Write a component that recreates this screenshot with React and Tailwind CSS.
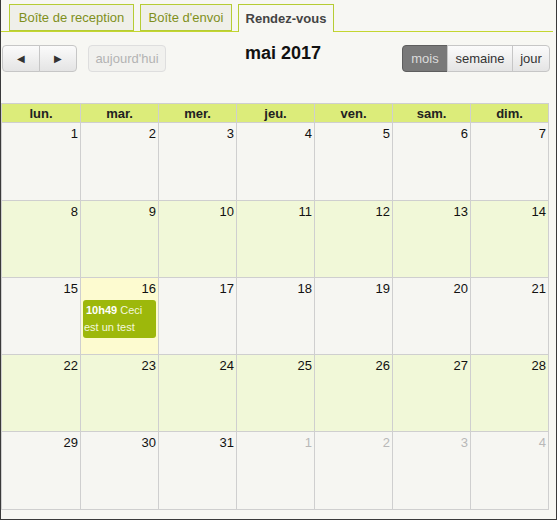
import React from 'react';

const days = ['lun.', 'mar.', 'mer.', 'jeu.', 'ven.', 'sam.', 'dim.'];

// May 2017 starts on a Monday; trailing days belong to June
const weeks = [
  [1, 2, 3, 4, 5, 6, 7],
  [8, 9, 10, 11, 12, 13, 14],
  [15, 16, 17, 18, 19, 20, 21],
  [22, 23, 24, 25, 26, 27, 28],
  [29, 30, 31, 1, 2, 3, 4],
];

const rowHeights = ['h-[78px]', 'h-[77px]', 'h-[77px]', 'h-[77px]', 'h-[78px]'];

function Tab({ label, active, width }) {
  return (
    <div
      className={
        active
          ? `${width} h-[28px] flex items-center justify-center border border-b-0 border-[#b6cc34] bg-[#f7f7f3] text-[13px] font-bold text-[#444] -mb-px relative z-10`
          : `${width} h-[27px] flex items-center justify-center border border-[#b6cc34] bg-[#efefe9] text-[13px] text-[#7f8f1c]`
      }
    >
      {label}
    </div>
  );
}

function Btn({ children, className = '' }) {
  return (
    <button
      className={`h-[27px] text-[13px] border border-[#c6c6c6] bg-gradient-to-b from-[#fbfbfb] to-[#e4e4e4] text-[#333] ${className}`}
    >
      {children}
    </button>
  );
}

export default function App() {
  return (
    <div
      className="w-[557px] h-[520px] bg-[#f7f7f3] border-x border-b border-[#3a3a3a] overflow-hidden"
      style={{ fontFamily: '"Liberation Sans", Arial, sans-serif' }}
    >
      {/* tab strip */}
      <div className="flex items-end gap-[6px] pl-[8px] pt-[4px] border-b border-[#c4d630] mr-[3px]">
        <Tab label="Boîte de reception" width="w-[125px]" />
        <Tab label="Boîte d'envoi" width="w-[92px]" />
        <Tab label="Rendez-vous" width="w-[96px]" active />
      </div>

      {/* toolbar */}
      <div className="flex items-center mt-[13px] pl-[1px] pr-[6px] h-[27px]">
        <div className="flex">
          <Btn className="w-[38px] rounded-l-[4px] flex items-center justify-center">
            <span className="text-[10px]">◀</span>
          </Btn>
          <Btn className="w-[38px] -ml-px rounded-r-[4px] flex items-center justify-center">
            <span className="text-[10px]">▶</span>
          </Btn>
        </div>
        <button className="ml-[11px] h-[27px] w-[78px] text-[13px] border border-[#dedede] rounded-[4px] bg-[#f1f1ee] text-[#b3b3b3]">
          aujourd'hui
        </button>
        <div className="flex-1 text-center text-[18px] font-bold text-[#111] -mt-[10px] pr-[2px]">mai 2017</div>
        <div className="flex">
          <button className="h-[27px] w-[46px] text-[13px] border border-[#5e5e5e] rounded-l-[4px] bg-[#797979] text-[#dcdcdc]">
            mois
          </button>
          <Btn className="w-[66px] -ml-px">semaine</Btn>
          <Btn className="w-[38px] -ml-px rounded-r-[4px]">jour</Btn>
        </div>
      </div>

      {/* month grid */}
      <div className="mt-[31px] w-[548px]">
        <div className="grid grid-cols-7 h-[20px] bg-[#dcec7a] border border-[#cfcfcf]">
          {days.map((d, i) => (
            <div
              key={d}
              className={`flex items-center justify-center text-[13px] font-bold text-[#222] ${i > 0 ? 'border-l border-[#cfcfcf]' : ''}`}
            >
              {d}
            </div>
          ))}
        </div>
        {weeks.map((week, r) => (
          <div
            key={r}
            className={`grid grid-cols-7 ${rowHeights[r]} border-x border-b border-[#cfcfcf] ${r % 2 === 1 ? 'bg-[#f1f8d8]' : 'bg-[#f6f6f2]'}`}
          >
            {week.map((n, c) => {
              const other = r === 4 && c > 2;
              const today = r === 2 && c === 1;
              return (
                <div
                  key={c}
                  className={`${c > 0 ? 'border-l border-[#cfcfcf]' : ''} ${today ? 'bg-[#fdfbd0]' : ''}`}
                >
                  <div className={`text-right pr-[2px] pt-[3px] text-[13px] leading-[16px] ${other ? 'text-[#b8b8b8]' : 'text-[#111]'}`}>
                    {n}
                  </div>
                  {today && (
                    <div className="mx-[2px] mt-[3px] rounded-[3px] bg-[#9db80b] px-[1px] py-[2px] text-[11px] leading-[17px] text-[#f3f7dc]">
                      <div className="pl-[2px]">
                        <span className="font-bold text-white">10h49</span> Ceci
                      </div>
                      <div>est un test</div>
                    </div>
                  )}
                </div>
              );
            })}
          </div>
        ))}
      </div>
    </div>
  );
}
